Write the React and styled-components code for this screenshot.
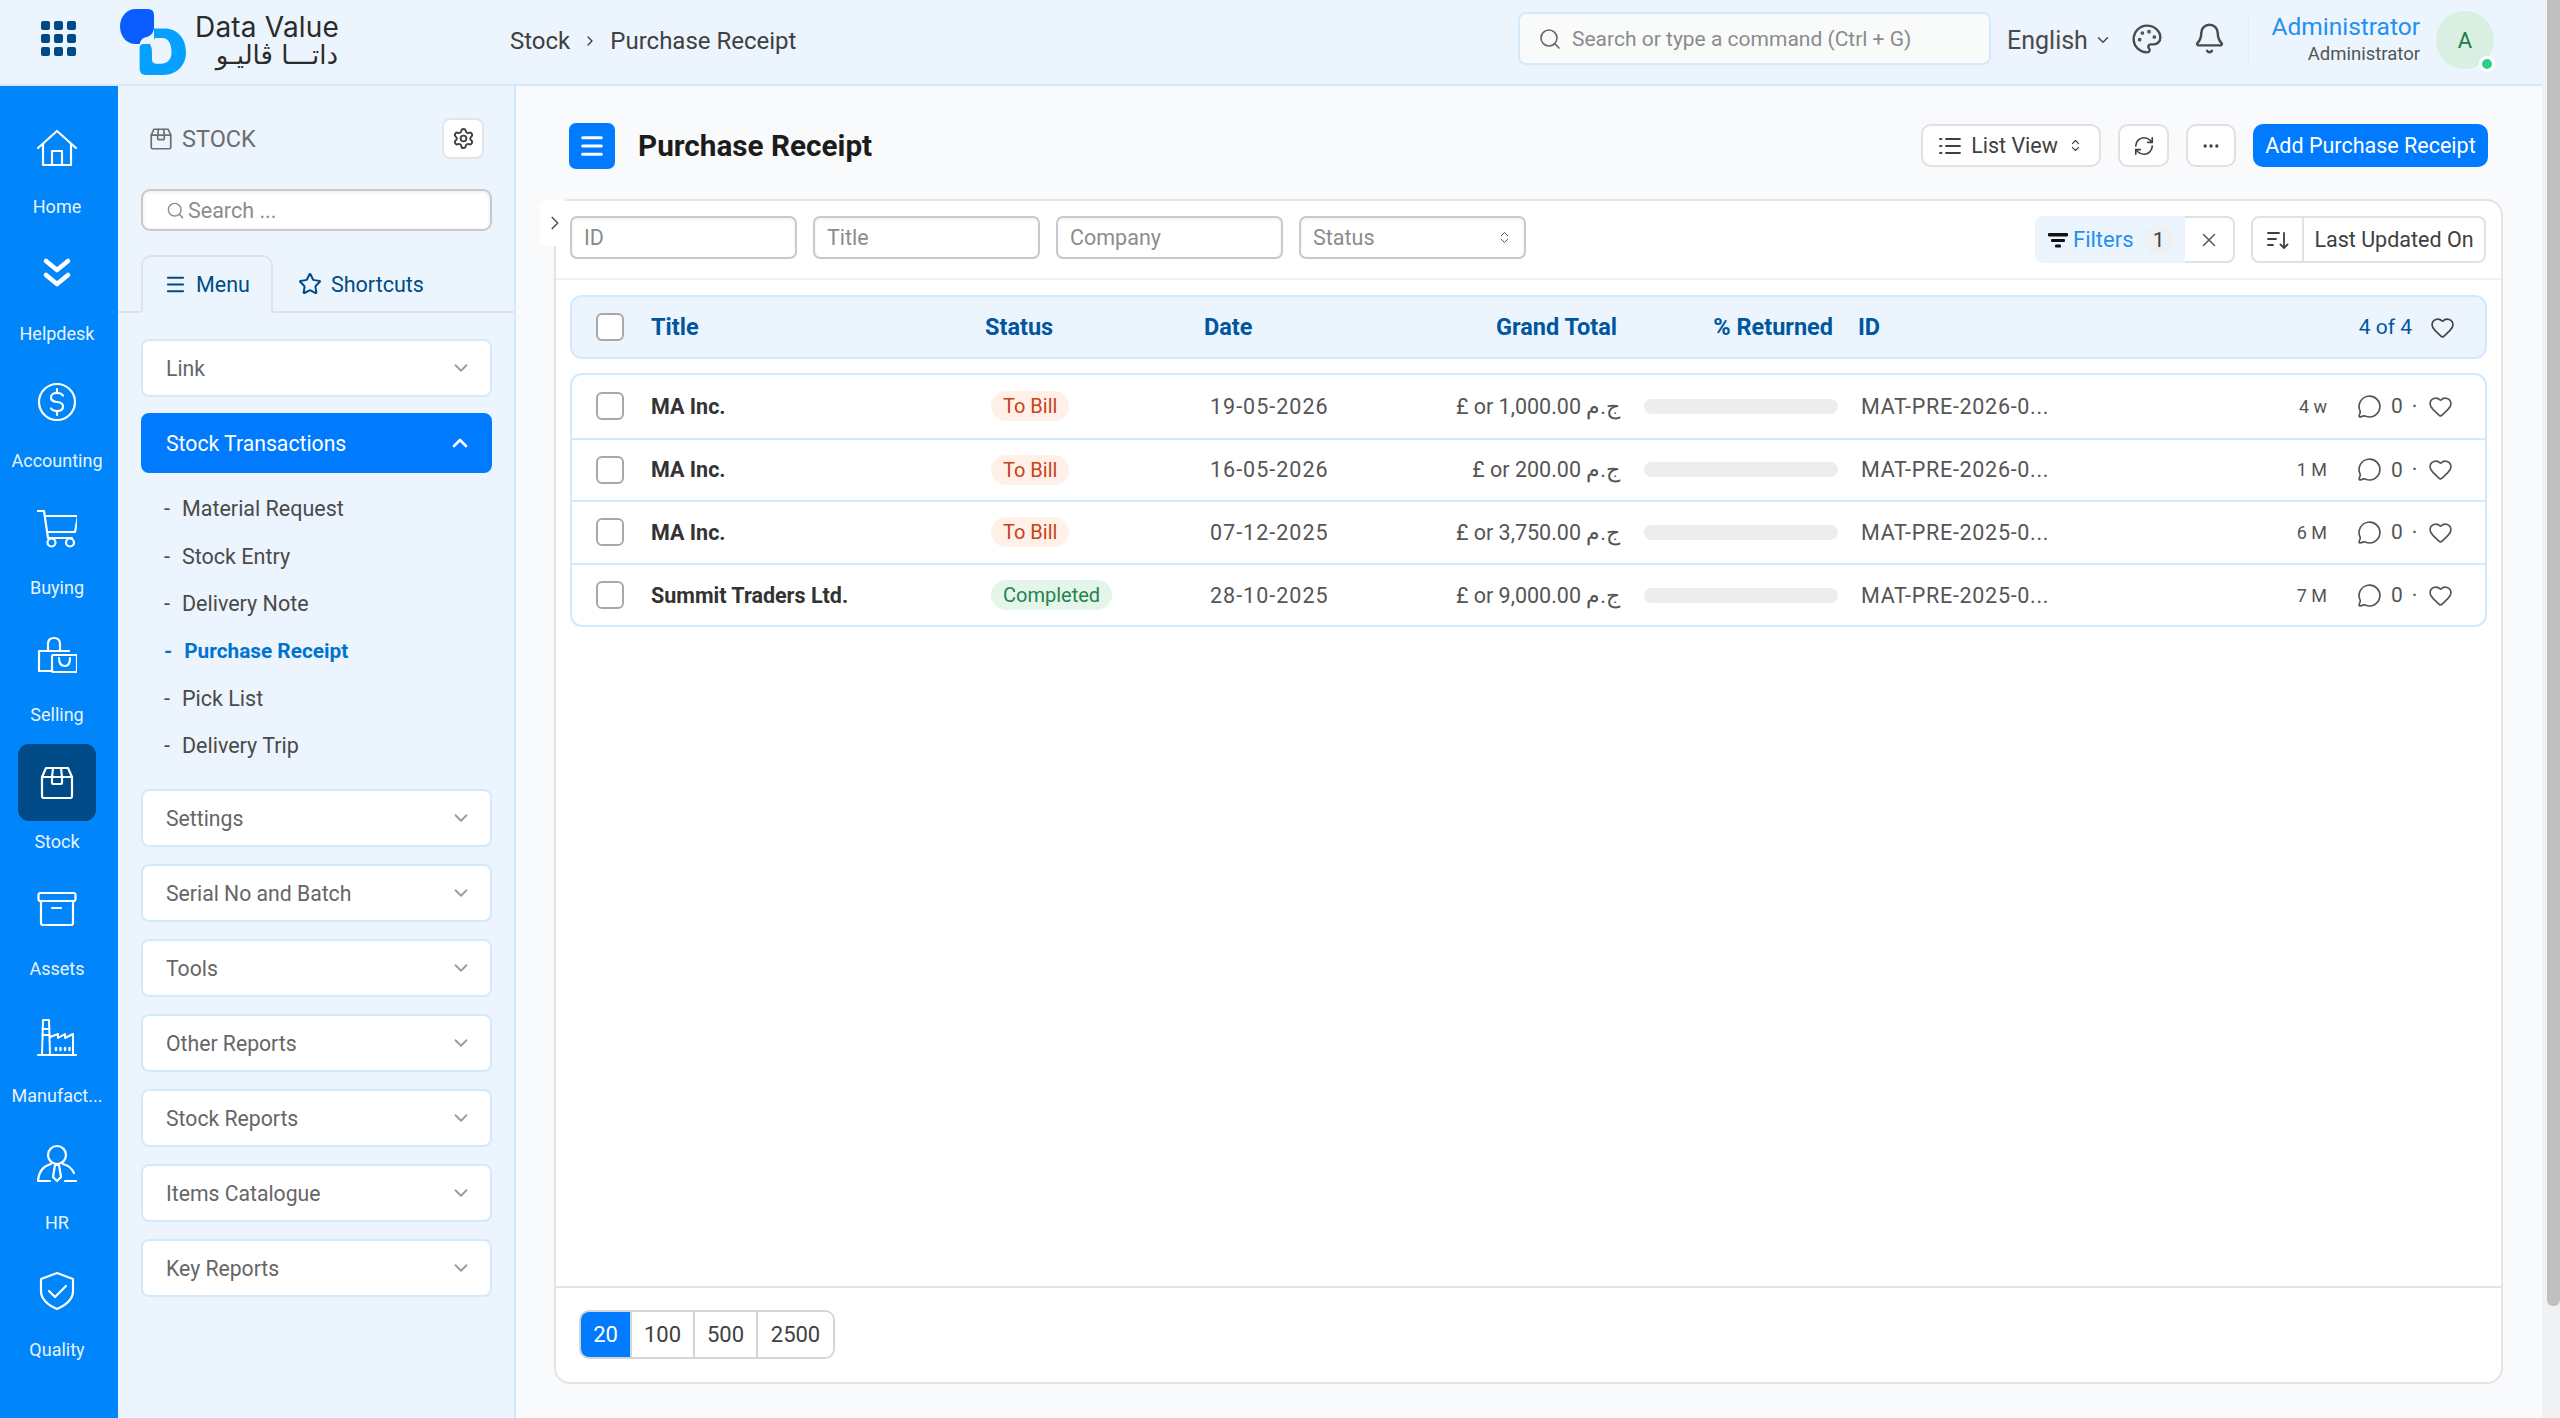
import React from "react";
import styled, { createGlobalStyle } from "styled-components";
import { Menu as MenuIcon, Star, ChevronDown, ChevronUp, ChevronRight, ChevronsUpDown, Search, Settings, Palette, Bell, RefreshCw, Ellipsis, X, MessageCircle, Heart } from "lucide-react";

const FONT = `"Roboto", "Noto Sans", sans-serif`;

const Global = createGlobalStyle`
  html, body { margin: 0; padding: 0; height: 100%; overflow: hidden; }
  body { font-family: ${FONT}; background: #f8fafc; color: #383838; }
  * { box-sizing: border-box; }
`;

const Page = styled.div`
  width: 2560px; height: 1418px; display: flex; overflow: hidden;
`;
const Content = styled.div`
  width: 2542px; display: flex; flex-direction: column;
`;
const ScrollTrack = styled.div`
  width: 18px; height: 1418px; background: #f0f1f2; padding-left: 5px;
`;
const ScrollThumb = styled.div`
  width: 13px; height: 1306px; background: #bfbfbf; border-radius: 0 0 6px 6px;
`;

/* Top bar */
const TopBar = styled.header`
  height: 86px; flex: none; display: flex; align-items: center; background: #ecf5fd;
  border-bottom: 2px solid #d3e9fc; position: relative;
`;
const Waffle = styled.div`
  width: 116px; display: flex; justify-content: center; margin-top: -7px;
`;
const WaffleGrid = styled.div`
  display: grid; grid-template-columns: repeat(3, 9px); gap: 4px;
  span { width: 9px; height: 9px; border-radius: 2px; background: #004b87; }
`;
const Brand = styled.div`
  display: flex; align-items: center; width: 394px; margin-top: -1px; padding-left: 3px;
`;
const BrandText = styled.div`
  margin-left: 8px; display: flex; flex-direction: column; color: #2b2b2b; line-height: 1;
`;
const BrandEn = styled.span`
  font-family: "Inter", sans-serif; font-size: 28px; font-weight: 400; letter-spacing: 0.2px; height: 31px; padding-top: 2px;
`;
const BrandAr = styled.span`
  font-family: "DejaVu Sans", sans-serif; font-size: 26px; direction: rtl; width: 143px; white-space: nowrap;
  height: 30px;
`;
const Crumbs = styled.nav`
  display: flex; align-items: center; font-size: 24px; color: #404040; gap: 12px; margin-top: -2px;
  width: 1008px;
`;
const TopSearch = styled.div`
  width: 473px; height: 53px; display: flex; align-items: center; gap: 10px; padding: 0 18px;
  background: #f8fbfa; border: 2px solid #d4e9fb; border-radius: 8px; color: #8b8b8b; font-size: 21px; margin-top: -7px;
`;
const Lang = styled.div`
  margin-left: 16px; width: 124px; display: flex; align-items: center; gap: 6px; font-size: 25px; color: #4a4a4a; margin-top: -4px;
`;
const TopIcon = styled.div`
  color: #4a4a4a; display: flex; margin-top: -7px; margin-left: ${p => p.$ml}px;
`;
const Divider = styled.div`
  width: 1px; height: 46px; background: #dcebf7; margin-left: 22px; margin-top: -7px;
`;
const User = styled.div`
  margin-left: 22px; width: 149px; text-align: right; display: flex; flex-direction: column; margin-top: -7px;
`;
const UserName = styled.span`
  font-size: 24.5px; color: #2490ef; line-height: 30px;
`;
const UserRole = styled.span`
  font-size: 18.5px; color: #555; line-height: 24px;
`;
const Avatar = styled.div`
  position: relative; width: 58px; height: 58px; margin-left: 16px; border-radius: 50%; background: #d8efe1; color: #1f7a4a;
  display: flex; align-items: center; justify-content: center; font-size: 22px; margin-top: -4px;
`;
const Presence = styled.i`
  position: absolute; right: -1px; bottom: -3px; width: 16px; height: 16px; border-radius: 50%; background: #2fcf8a; border: 3px solid #fff;
`;

/* Body */
const Body = styled.div`
  flex: 1; display: flex; min-height: 0;
`;
const Rail = styled.aside`
  width: 118px; flex: none; background: #0085fa; padding: 23px 4px 0 0; display: flex; flex-direction: column; align-items: center;
`;
const RailItem = styled.div`
  height: 127px; width: 100%; display: flex; flex-direction: column; align-items: center; color: #e8f3fe;
`;
const RailIconBox = styled.div`
  width: 78px; height: 77px; border-radius: 11px; display: flex; align-items: center; justify-content: center; color: #fff;
  background: ${p => (p.$active ? "#004b87" : "transparent")};
`;
const RailLabel = styled.span`
  font-size: 18px; line-height: 22px; margin-top: 10px; white-space: nowrap;
`;

/* Side panel */
const Panel = styled.aside`
  width: 398px; flex: none; background: #ecf5fd; border-right: 2px solid #d3e9fc; padding-top: 32px;
`;
const PanelHead = styled.div`
  display: flex; align-items: center; padding: 0 30px 0 30px; height: 41px; color: #6e6e6e; font-size: 23.5px; gap: 8px;
`;
const PanelTitle = styled.span`
  flex: 1;
`;
const SquareBtn = styled.div`
  width: 42px; height: 41px; border: 2px solid #e2e6ea; background: #fff; border-radius: 8px; display: flex; align-items: center; justify-content: center; color: #404040;
`;
const PanelSearch = styled.div`
  margin: 30px 22px 0 23px; height: 42px; border: 2px solid #c9c9c9; border-radius: 9px; background: #fff; display: flex; align-items: center;
  box-shadow: inset 0 1px 4px rgba(0,0,0,.08);
  padding-left: 23px; gap: 3px; color: #8c8c8c; font-size: 21.5px;
`;
const Tabs = styled.div`
  margin-top: 24px; height: 58px; display: flex; border-bottom: 2px solid #dfe3e8; padding-left: 23px;
`;
const Tab = styled.div`
  height: 58px; display: flex; align-items: center; gap: 9px; color: #004b87; font-size: 21.5px;
  width: ${p => p.$w}px; padding-left: ${p => p.$pl}px;
  ${p => p.$active ? `border: 2px solid #dfe3e8; border-bottom: 2px solid #ecf5fd; border-radius: 10px 10px 0 0;` : ""}
`;
const Accordion = styled.div`
  padding: 26px 22px 0 23px; display: flex; flex-direction: column;
`;
const AccHead = styled.div`
  height: ${p => (p.$open ? 60 : 58)}px; border-radius: 8px; display: flex; align-items: center; justify-content: space-between; padding: 0 18px 0 23px;
  font-size: 21.2px; margin-bottom: ${p => (p.$open ? 0 : 17)}px; margin-top: ${p => (p.$open ? -1 : 0)}px; flex: none;
  background: ${p => (p.$open ? "#007bff" : "#fff")};
  color: ${p => (p.$open ? "#fff" : "#666")};
  border: 2px solid ${p => (p.$open ? "#007bff" : "#d3e9fc")};
  svg { color: ${p => (p.$open ? "#fff" : "#9b9b9b")}; }
`;
const SubList = styled.ul`
  list-style: none; margin: 0; padding: 12px 0 20px 23px;
`;
const SubItem = styled.li`
  height: 47.4px; display: flex; align-items: center; gap: 12px;
  font-size: ${p => (p.$active ? 20.8 : 21.5)}px;
  color: ${p => (p.$active ? "#0073d1" : "#4a4a4a")};
  font-weight: ${p => (p.$active ? 700 : 400)};
`;

/* Main */
const Main = styled.main`
  flex: 1; min-width: 0; padding: 0 39px 0 38px; background: #f8fafc; display: flex; flex-direction: column;
`;
const PageHead = styled.div`
  height: 113px; display: flex; align-items: center; padding: 6px 15px 0 15px; flex: none;
`;
const MenuBtn = styled.div`
  width: 46px; height: 46px; border-radius: 7px; background: #007bff; color: #fff; display: flex; align-items: center; justify-content: center;
`;
const PageTitle = styled.h1`
  margin: 0 0 0 23px; font-size: 29.7px; font-weight: 700; color: #1c1c1c; flex: 1;
`;
const Actions = styled.div`
  display: flex; align-items: center; gap: 17px;
`;
const Btn = styled.div`
  height: 43px; border: 2px solid #dfe1e5; border-radius: 10px; background: #fff; display: flex; align-items: center; justify-content: center; color: #404040; font-size: 21.5px;
  width: ${p => p.$w}px; gap: ${p => p.$gap || 0}px;
`;
const PrimaryBtn = styled.div`
  height: 43px; width: 235px; border-radius: 10px; background: #007bff; color: #fff; font-size: 21.5px; display: flex; align-items: center; justify-content: center; font-weight: 400;
`;
const Card = styled.section`
  height: 1185px; background: #fff; border: 2px solid #e2e4e8; border-radius: 16px; display: flex; flex-direction: column; position: relative;
`;
const Collapse = styled.div`
  position: absolute; left: -16px; top: -1px; width: 30px; height: 46px; background: #fff; border-radius: 8px; display: flex; align-items: center; justify-content: center; color: #555;
`;
const FilterBar = styled.div`
  height: 79px; flex: none; border-bottom: 2px solid #eff0f2; display: flex; align-items: flex-start; padding: 15px 15px 0 14px;
`;
const FieldGroup = styled.div`
  display: flex; gap: 16px; flex: 1;
`;
const Field = styled.div`
  width: 227px; height: 43px; border: 2px solid #c9c9c9; border-radius: 7px; display: flex; align-items: center; justify-content: space-between; padding: 0 12px;
  color: #8c8c8c; font-size: 21.5px; background: #fff; box-shadow: inset 0 1px 3px rgba(0,0,0,.07);
`;
const FilterGroup = styled.div`
  display: flex; height: 47px; margin-right: 16px;
`;
const FilterTag = styled.div`
  width: 150px; background: #ecf5fd; border-radius: 8px 0 0 8px; display: flex; align-items: center; padding-left: 13px; gap: 5px; color: #2490ef; font-size: 22px;
  svg { color: #111; }
`;
const FilterCount = styled.span`
  width: 30px; height: 30px; margin-left: 5px; border-radius: 50%; background: #eef1f3; color: #404040; display: flex; align-items: center; justify-content: center; font-size: 21px;
`;
const FilterClear = styled.div`
  width: 50px; border: 2px solid #dfe1e5; border-left: 0; border-radius: 0 8px 8px 0; display: flex; align-items: center; justify-content: center; color: #555;
`;
const SortGroup = styled.div`
  display: flex; height: 47px; border: 2px solid #dfe1e5; border-radius: 8px; width: 235px; color: #404040; font-size: 21.5px;
`;
const SortIcon = styled.div`
  width: 51px; border-right: 2px solid #dfe1e5; display: flex; align-items: center; justify-content: center;
`;
const SortLabel = styled.div`
  flex: 1; display: flex; align-items: center; justify-content: center;
`;
const GRID = `24px 30px 25px 334px 219px 200px 216px 238px 1fr`;
const ListHeader = styled.div`
  margin: 15px 14px 0 14px; height: 64px; flex: none; display: grid; grid-template-columns: ${GRID}; align-items: center;
  background: #ecf5fd; border: 2px solid #d3e9fc; border-radius: 12px; padding-right: 30px;
  color: #00579f; font-weight: 700; font-size: 23.5px;
`;
const RowList = styled.div`
  margin: 14px 14px 0 14px; border: 2px solid #d3e9fc; border-radius: 12px; flex: none; overflow: hidden;
`;
const Row = styled.div`
  height: 62.6px; display: grid; grid-template-columns: ${GRID}; align-items: center; padding-right: 30px;
  font-size: 21.5px; color: #555;
  & + & { border-top: 2px solid #d3e9fc; }
`;
const Check = styled.div`
  grid-column: 2; width: 28px; height: 28px; border: 2px solid #a8a8a8; border-radius: 6px; background: #fff;
`;
const TitleCell = styled.div`
  grid-column: 4; font-weight: 700; color: ${p => p.$color || "#333"};
`;
const StatusCell = styled.div`
  padding-left: ${p => p.$pl || 0}px;
`;
const Badge = styled.span`
  display: inline-flex; height: 30px; align-items: center; padding: 0 12px; border-radius: 15px; font-size: 20px;
  background: ${p => (p.$done ? "#e4f5e9" : "#fff0e8")};
  color: ${p => (p.$done ? "#26824f" : "#c9401a")};
`;
const DateCell = styled.div`
  padding-left: 6px; letter-spacing: 1px;
`;
const Right = styled.div`
  text-align: right; padding-right: ${p => p.$pr || 0}px; white-space: nowrap;
`;
const Bar = styled.div`
  height: 15px; width: 194px; margin-left: 24px; background: #ededed; border-radius: 8px;
`;
const RowEnd = styled.div`
  grid-column: 9; display: flex; align-items: center; color: #555;
`;
const IdText = styled.span`
  width: 250px; flex: none; padding-left: 3px; letter-spacing: 0.7px;
`;
const HeadEnd = styled.div`
  grid-column: 9; display: flex; align-items: center; justify-content: space-between;
`;
const HeadCount = styled.div`
  display: flex; align-items: center; gap: 18px; font-weight: 400; font-size: 21px; color: #00579f;
  svg { color: #444; }
`;
const Age = styled.span`
  margin-left: auto; font-size: 18px; width: 40px; text-align: right;
`;
const Social = styled.div`
  display: flex; align-items: center; margin-left: 30px; width: 98px;
  span { margin: 0 9px; font-size: 21px; }
  b { font-weight: 400; margin-right: 11px; }
`;
const Spacer = styled.div`
  flex: 1;
`;
const Footer = styled.div`
  height: 96px; border-top: 2px solid #e2e4e8; flex: none; padding: 22px 0 0 23px;
`;
const Pager = styled.div`
  display: inline-flex; height: 49px; border: 2px solid #d4d5d9; border-radius: 10px; overflow: hidden;
`;
const PageNum = styled.div`
  width: ${p => p.$w}px; display: flex; align-items: center; justify-content: center; font-size: 22px;
  background: ${p => (p.$active ? "#007bff" : "#fff")};
  color: ${p => (p.$active ? "#fff" : "#404040")};
  & + & { border-left: 2px solid #d4d5d9; }
`;

const Ic = ({ children, size = 40, sw = 2.2, vb = 40 }) => (
  <svg width={size} height={size} viewBox={`0 0 ${vb} ${vb}`} fill="none" stroke="currentColor" strokeWidth={sw} strokeLinecap="round" strokeLinejoin="round">{children}</svg>
);

const BoxIcon = ({ size = 40, sw = 2.2 }) => (
  <Ic size={size} sw={sw}>
    <path d="M5 14 L9 5 H31 L35 14 V33 Q35 35 33 35 H7 Q5 35 5 33 Z" />
    <path d="M5 14 H35" />
    <path d="M16 5 L15 14 V20 Q15 21 16 21 H24 Q25 21 25 20 V14 L24 5" />
  </Ic>
);

const railItems = [
  ["Home", <Ic><path d="M1 20 L20 3 L39 20" /><path d="M6 16 V37 H34 V16" /><path d="M15 37 V23 H25 V37" /></Ic>],
  ["Helpdesk", <Ic sw={4.6}><path d="M9 6 L20 15 L31 6" /><path d="M9 20 L20 29 L31 20" /></Ic>],
  ["Accounting", <Ic><circle cx="20" cy="20" r="18" /><path d="M26 13.5 Q24.5 11 20 11 Q14 11 14 15.5 Q14 19.5 20 20 Q26 20.5 26 24.5 Q26 29 20 29 Q15.5 29 14 26.5" /><path d="M20 7 V11 M20 29 V33" /></Ic>],
  ["Buying", <Ic><path d="M0 2 H7 L11 29 H35" /><path d="M8 7 H41 L38 23 H10" /><circle cx="14.5" cy="33.5" r="4" /><circle cx="33" cy="33.5" r="4" /></Ic>],
  ["Selling", <Ic><path d="M15 35 H2 V15 H32" /><path d="M11 15 V8 Q11 2 17 2 Q23 2 23 8 V15" /><rect x="15" y="19" width="25" height="17" rx="1" /><path d="M22 22 Q22 30 28 30 Q33 30 33 22" /></Ic>],
  ["Stock", <BoxIcon />, true],
  ["Assets", <Ic><rect x="1.5" y="3" width="37" height="8" rx="2" /><path d="M4 11 V33 Q4 35 6 35 H34 Q36 35 36 33 V11" /><path d="M15 18 H24" /></Ic>],
  ["Manufact...", <Ic sw={2}><path d="M1 38 H39" /><path d="M5 38 L6 3 H12 L13 38" /><path d="M5.5 12 H12.5 M5.5 18 H12.5" /><path d="M13 20 L21 17 V21 L28 17 V21 L36 17 V38" /><path d="M19 31 V33 M23.5 31 V33 M28 31 V33 M32.5 31 V33" strokeWidth="2.4" /></Ic>],
  ["HR", <Ic><circle cx="20" cy="11" r="9" /><path d="M14 20 Q2 23 1 37 H13" /><path d="M26 20 Q34 22 37 29" /><path d="M28 37 H39" /><path d="M18 21 H22 L24 33 L20 37 L16 33 Z" /></Ic>],
  ["Quality", <Ic><path d="M20 2 L36 8 V20 Q36 31 20 38 Q4 31 4 20 V8 Z" /><path d="M12 20 L18 26 L29 15" /></Ic>],
];

const accTop = ["Settings", "Serial No and Batch", "Tools", "Other Reports", "Stock Reports", "Items Catalogue", "Key Reports"];
const subs = ["Material Request", "Stock Entry", "Delivery Note", "Purchase Receipt", "Pick List", "Delivery Trip"];
const rows = [
  { t: "MA Inc.", s: "To Bill", d: "19-05-2026", a: "£ or 1,000.00 ج.م", id: "MAT-PRE-2026-0...", age: "4 w" },
  { t: "MA Inc.", s: "To Bill", d: "16-05-2026", a: "£ or 200.00 ج.م", id: "MAT-PRE-2026-0...", age: "1 M" },
  { t: "MA Inc.", s: "To Bill", d: "07-12-2025", a: "£ or 3,750.00 ج.م", id: "MAT-PRE-2025-0...", age: "6 M" },
  { t: "Summit Traders Ltd.", s: "Completed", d: "28-10-2025", a: "£ or 9,000.00 ج.م", id: "MAT-PRE-2025-0...", age: "7 M" },
];

const Logo = () => (
  <svg width="68" height="68" viewBox="0 0 66 66">
    <path d="M16 1 H28 Q34 1 34 7 V19 Q34 25 28 28 Q21 29 20 35 H16 C7 35 1 27 1 18 C1 8 8 1 16 1 Z" fill="#0a5cff" />
    <path d="M34 20 H44 C57 20 65 30 65 43 C65 56 56 65 43 65 H26 Q20 65 20 59 V39 Q20 35 24 35 H28 Q34 35 34 29 Z" fill="#06a0ff" />
    <path d="M30 35 Q33 33 35 29 H42 C48 29 51 35 51 43 C51 50 47 54 41 54 H36 Q32 54 32 50 V43 Q32 38 30 35 Z" fill="#ecf5fd" />
  </svg>
);

const FunnelIcon = () => (
  <svg width="20" height="20" viewBox="0 0 20 20" fill="currentColor"><rect x="0" y="3" width="20" height="3.5" rx="1" /><rect x="3" y="9" width="14" height="3" rx="1" /><rect x="7" y="14.5" width="6" height="3" rx="1" /></svg>
);
const SortIc = () => (
  <svg width="22" height="22" viewBox="0 0 22 22" fill="none" stroke="#404040" strokeWidth="1.8" strokeLinecap="round" strokeLinejoin="round"><path d="M1 4 H12 M1 10 H9 M1 16 H6" /><path d="M17 4 V19 M13.5 15.5 L17 19 L20.5 15.5" /></svg>
);
const ListIc = () => (
  <svg width="22" height="22" viewBox="0 0 22 22" fill="none" stroke="#404040" strokeWidth="1.8" strokeLinecap="round"><path d="M7 4 H21 M7 11 H21 M7 18 H21 M1 4 H2.5 M1 11 H2.5 M1 18 H2.5" /></svg>
);

export default function App() {
  return (
    <Page>
      <Global />
      <Content>
        <TopBar>
          <Waffle><WaffleGrid>{Array.from({ length: 9 }).map((_, i) => <span key={i} />)}</WaffleGrid></Waffle>
          <Brand>
            <Logo />
            <BrandText>
              <BrandEn>Data Value</BrandEn>
              <BrandAr>داتـــا ڤاليـو</BrandAr>
            </BrandText>
          </Brand>
          <Crumbs><span>Stock</span><ChevronRight size={16} strokeWidth={2} /><span>Purchase Receipt</span></Crumbs>
          <TopSearch><Search size={24} strokeWidth={1.6} color="#666" /><span>Search or type a command (Ctrl + G)</span></TopSearch>
          <Lang><span>English</span><ChevronDown size={18} strokeWidth={2} /></Lang>
          <TopIcon $ml={0}><Palette size={32} strokeWidth={1.8} /></TopIcon>
          <TopIcon $ml={30}><Bell size={33} strokeWidth={1.8} /></TopIcon>
          <Divider />
          <User><UserName>Administrator</UserName><UserRole>Administrator</UserRole></User>
          <Avatar>A<Presence /></Avatar>
        </TopBar>
        <Body>
          <Rail>
            {railItems.map(([label, icon, active]) => (
              <RailItem key={label}>
                <RailIconBox $active={active}>{icon}</RailIconBox>
                <RailLabel>{label}</RailLabel>
              </RailItem>
            ))}
          </Rail>
          <Panel>
            <PanelHead>
              <BoxIcon size={26} sw={2.6} />
              <PanelTitle>STOCK</PanelTitle>
              <SquareBtn><Settings size={23} strokeWidth={2} /></SquareBtn>
            </PanelHead>
            <PanelSearch><Search size={19} strokeWidth={1.8} /><span>Search ...</span></PanelSearch>
            <Tabs>
              <Tab $active $w={132} $pl={21}><MenuIcon size={23} strokeWidth={2} /><span>Menu</span></Tab>
              <Tab $w={200} $pl={25}><Star size={24} strokeWidth={2} /><span>Shortcuts</span></Tab>
            </Tabs>
            <Accordion>
              <AccHead>Link<ChevronDown size={22} strokeWidth={2} /></AccHead>
              <AccHead $open>Stock Transactions<ChevronUp size={24} strokeWidth={2.6} /></AccHead>
              <SubList>
                {subs.map(s => <SubItem key={s} $active={s === "Purchase Receipt"}><span>-</span><span>{s}</span></SubItem>)}
              </SubList>
              {accTop.map(a => <AccHead key={a}>{a}<ChevronDown size={22} strokeWidth={2} /></AccHead>)}
            </Accordion>
          </Panel>
          <Main>
            <PageHead>
              <MenuBtn><MenuIcon size={28} strokeWidth={2.6} /></MenuBtn>
              <PageTitle>Purchase Receipt</PageTitle>
              <Actions>
                <Btn $w={180} $gap={10}><ListIc /><span>List View</span><ChevronsUpDown size={15} strokeWidth={1.8} /></Btn>
                <Btn $w={51}><RefreshCw size={22} strokeWidth={1.8} /></Btn>
                <Btn $w={50}><Ellipsis size={20} strokeWidth={2} /></Btn>
                <PrimaryBtn>Add Purchase Receipt</PrimaryBtn>
              </Actions>
            </PageHead>
            <Card>
              <Collapse><ChevronRight size={22} strokeWidth={1.8} /></Collapse>
              <FilterBar>
                <FieldGroup>
                  <Field>ID</Field>
                  <Field>Title</Field>
                  <Field>Company</Field>
                  <Field>Status<ChevronsUpDown size={15} strokeWidth={1.6} color="#555" /></Field>
                </FieldGroup>
                <FilterGroup>
                  <FilterTag><FunnelIcon /><span>Filters</span><FilterCount>1</FilterCount></FilterTag>
                  <FilterClear><X size={22} strokeWidth={1.6} /></FilterClear>
                </FilterGroup>
                <SortGroup>
                  <SortIcon><SortIc /></SortIcon>
                  <SortLabel>Last Updated On</SortLabel>
                </SortGroup>
              </FilterBar>
              <ListHeader>
                <Check />
                <TitleCell $color="#00579f">Title</TitleCell>
                <StatusCell>Status</StatusCell>
                <div>Date</div>
                <Right $pr={3}>Grand Total</Right>
                <Right $pr={25}>% Returned</Right>
                <HeadEnd>
                  <span>ID</span>
                  <HeadCount><span>4 of 4</span><Heart size={25} strokeWidth={1.6} /></HeadCount>
                </HeadEnd>
              </ListHeader>
              <RowList>
                {rows.map((r, i) => (
                  <Row key={i}>
                    <Check />
                    <TitleCell>{r.t}</TitleCell>
                    <StatusCell $pl={6}><Badge $done={r.s === "Completed"}>{r.s}</Badge></StatusCell>
                    <DateCell>{r.d}</DateCell>
                    <Right>{r.a}</Right>
                    <Bar />
                    <RowEnd>
                      <IdText>{r.id}</IdText>
                      <Age>{r.age}</Age>
                      <Social>
                        <MessageCircle size={25} strokeWidth={1.6} />
                        <span>0</span>
                        <b>·</b>
                        <Heart size={25} strokeWidth={1.6} />
                      </Social>
                    </RowEnd>
                  </Row>
                ))}
              </RowList>
              <Spacer />
              <Footer>
                <Pager>
                  <PageNum $active $w={49}>20</PageNum>
                  <PageNum $w={63}>100</PageNum>
                  <PageNum $w={63}>500</PageNum>
                  <PageNum $w={77}>2500</PageNum>
                </Pager>
              </Footer>
            </Card>
          </Main>
        </Body>
      </Content>
      <ScrollTrack><ScrollThumb /></ScrollTrack>
    </Page>
  );
}
